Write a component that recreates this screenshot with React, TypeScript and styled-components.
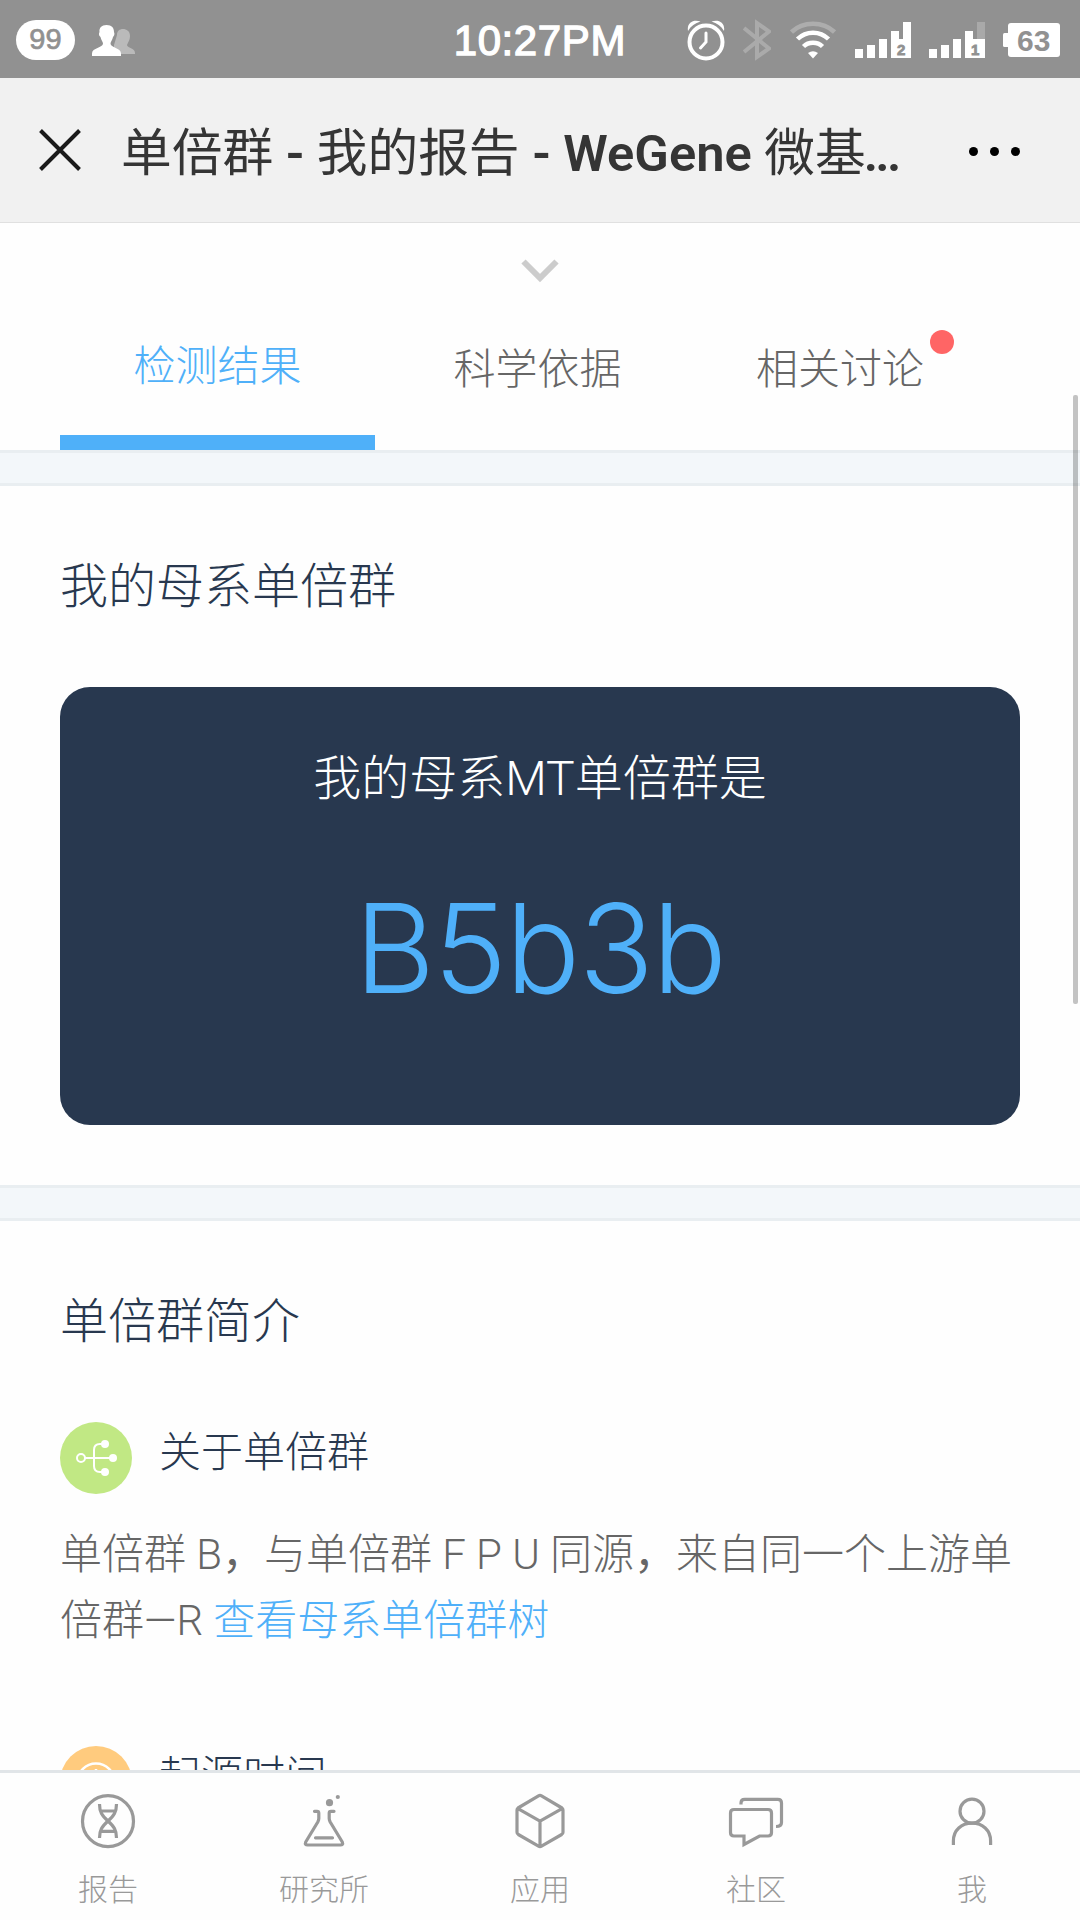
import React from "react";
import styled, { createGlobalStyle } from "styled-components";

const GlobalStyle = createGlobalStyle`
  html, body { margin: 0; padding: 0; }
  body { background: #fefefe; overflow: hidden; }
  * { box-sizing: border-box; }
`;

const Screen = styled.div`
  position: relative;
  width: 1080px;
  height: 1920px;
  display: flex;
  flex-direction: column;
  overflow: hidden;
  background: #fefefe;
  font-family: Roboto, "Noto Sans CJK SC", sans-serif;
  font-weight: 300;
`;

/* Status bar */
const StatusBar = styled.header`
  flex: none;
  height: 78px;
  padding: 0 20px 0 16px;
  display: grid;
  grid-template-columns: 1fr 176px 1fr;
  align-items: center;
  background: #919191;
`;
const StatusLeft = styled.div`
  display: flex;
  align-items: center;
  gap: 17px;
`;
const CountPill = styled.span`
  width: 59px;
  height: 40px;
  border-radius: 20px;
  background: #fff;
  color: #919191;
  font: 400 29px/38px "Liberation Sans", sans-serif;
  -webkit-text-stroke: 0.7px #919191;
  text-align: center;
`;
const Clock = styled.time`
  font: 400 42px/78px "Liberation Sans", sans-serif;
  -webkit-text-stroke: 1.3px #fff;
  color: #fff;
  letter-spacing: 0.6px;
  text-align: right;
  white-space: nowrap;
  padding-top: 2px;
`;
const StatusRight = styled.div`
  display: flex;
  align-items: center;
  justify-content: flex-end;
  gap: 18px;
  padding-bottom: 1px;
`;
const StatusIcon = styled.svg<{ $after?: number }>`
  display: block;
  flex: none;
  margin-right: ${(p) => p.$after ?? 0}px;
`;
const SignalDigit = styled.text`
  font: 700 15px "Liberation Sans", sans-serif;
  fill: #919191;
  stroke: #919191;
  stroke-width: 0.8px;
`;
const BatteryDigits = styled.text`
  font: 700 30px "Liberation Sans", sans-serif;
  fill: #919191;
`;

/* Title bar */
const TitleBar = styled.div`
  flex: none;
  height: 145px;
  padding: 0 60px 0 39px;
  display: flex;
  align-items: center;
  background: #f1f1f1;
  border-bottom: 1px solid #e0e0e0;
`;
const Title = styled.h1`
  flex: 1;
  margin: 0 0 0 40px;
  padding-top: 7px;
  font-size: 50.7px;
  line-height: 80px;
  font-weight: 400;
  color: #353535;
  white-space: nowrap;
`;
const Strong = styled.span`
  font-weight: 600;
`;
const Ellipsis = styled.span`
  font-weight: 600;
  letter-spacing: -2.8px;
  margin-left: -2px;
`;

/* Scrolling content */
const Content = styled.main`
  flex: 1;
  min-height: 0;
  overflow: hidden;
`;
const Expander = styled.div`
  height: 77px;
  padding-top: 36px;
  display: flex;
  justify-content: center;
`;
const Tabs = styled.nav`
  height: 150px;
  padding: 0 60px;
  display: flex;
`;
const Tab = styled.div<{ $width: number; $active?: boolean }>`
  width: ${(p) => p.$width}px;
  padding-top: ${(p) => (p.$active ? 37 : 40)}px;
  text-align: center;
  font-size: 42px;
  line-height: 60px;
  color: ${(p) => (p.$active ? "#4fb0f9" : "#666")};
  border-bottom: ${(p) => (p.$active ? "15px solid #4fb0f9" : "none")};
`;
const TabLabel = styled.span`
  position: relative;
`;
const Dot = styled.i`
  position: absolute;
  left: 174px;
  top: -15px;
  width: 24px;
  height: 24px;
  border-radius: 50%;
  background: #ff6565;
`;
const Band = styled.div`
  height: 36px;
  background: #f3f7fa;
  border: solid #e9eef1;
  border-width: 3px 0;
`;
const Section = styled.section<{ $height?: number }>`
  height: ${(p) => (p.$height ? p.$height + "px" : "auto")};
  padding: 66px 60px 0;
`;
const SectionTitle = styled.h2`
  margin: 0;
  font-size: 48px;
  line-height: 70px;
  font-weight: 300;
  color: #28384f;
`;
const ResultCard = styled.div`
  height: 438px;
  margin-top: 65px;
  padding-top: 57px;
  border-radius: 30px;
  background: #28384f;
  text-align: center;
`;
const ResultLabel = styled.div`
  font-size: 48px;
  line-height: 70px;
  color: #fff;
`;
const ResultValue = styled.div`
  margin-top: 59px;
  font-family: Inter, "Liberation Sans", sans-serif;
  font-size: 124px;
  line-height: 150px;
  font-weight: 300;
  letter-spacing: -1.5px;
  color: #4fb0f9;
`;
const ItemHead = styled.div<{ $top: number }>`
  margin-top: ${(p) => p.$top}px;
  display: flex;
  gap: 27px;
`;
const ItemIcon = styled.div<{ $color: string }>`
  width: 72px;
  height: 72px;
  border-radius: 50%;
  background: ${(p) => p.$color};
`;
const ItemTitle = styled.h3`
  margin: 0;
  padding-top: 2px;
  font-size: 42px;
  line-height: 58px;
  font-weight: 300;
  color: #28384f;
`;
const Paragraph = styled.p`
  margin: 28px 0 0;
  font-size: 42px;
  line-height: 66px;
  color: #666;
`;
const Comma = styled.span`
  font-weight: 400;
`;
const Link = styled.a`
  color: #4fb0f9;
`;
const ScrollThumb = styled.div`
  position: absolute;
  right: 2px;
  top: 395px;
  width: 5px;
  height: 609px;
  border-radius: 2px;
  background: rgba(0, 0, 0, 0.23);
`;

/* Bottom navigation */
const BottomNav = styled.nav`
  flex: none;
  height: 150px;
  display: grid;
  grid-template-columns: repeat(5, 1fr);
  border-top: 3px solid #e1e5e8;
  background: #fefefe;
`;
const NavItem = styled.div`
  display: flex;
  flex-direction: column;
  align-items: center;
  padding-top: 18px;
  gap: 16px;
  font-size: 30px;
  line-height: 46px;
  color: #999;
`;
const NavIcon = styled.svg`
  display: block;
  width: 60px;
  height: 60px;
  fill: none;
  stroke: #999;
  stroke-width: 3.2;
`;

const Signal = ({ digit, weak }: { digit: string; weak?: boolean }) => (
  <StatusIcon width="56" height="36" viewBox="0 0 56 36" fill="#fff">
    <rect x="0" y="27" width="8" height="9" />
    <rect x="12" y="23" width="8" height="13" />
    <rect x="24" y="17" width="8" height="19" />
    <rect x="36" y="9" width="8" height="27" />
    <rect x="48" y="0" width="8" height="17" fill={weak ? "#a9a9a9" : "#fff"} />
    <rect x="36" y="17" width="20" height="19" />
    <SignalDigit x="42" y="33">{digit}</SignalDigit>
  </StatusIcon>
);

const icons = {
  report: (
    <>
      <circle cx="30" cy="30.200" r="25.500" />
      <path d="M21.500 13c0 8 2.500 11.500 8.500 17s8.500 9 8.500 17M38.500 13c0 8-2.500 11.500-8.500 17s-8.500 9-8.500 17M23 20h14M23 40.300h14" />
    </>
  ),
  lab: (
    <>
      <path strokeLinecap="round" strokeLinejoin="round" d="M20.500 20.300h2.500q1.800 0 1.800 1.800v5.400q0 1.500-1 3.500L11.700 51q-1.200 3 2 3h32.600q3.200 0 2-3L36.200 31q-1-2-1-3.500v-5.400q0-1.800 1.800-1.800H40M21.500 46.800h17" />
      <circle cx="35.500" cy="11.700" r="3.600" fill="#999" stroke="none" />
      <circle cx="43.800" cy="6" r="2.100" fill="#999" stroke="none" />
    </>
  ),
  apps: (
    <path strokeLinejoin="round" d="M28.500 4.900q1.500-.9 3 0L52 17q1 .7 1 2V41.200q0 1.500-1.300 2.300L31.500 55.200q-1.500 1-3 0L8.300 43.500Q7 42.700 7 41.200V19q0-1.300 1-2zM8 17.700l22 12.500 22-12.500M30 30.200v25" />
  ),
  community: (
    <>
      <path d="M8 18.500h34q3.500 0 3.500 3.500v19.500q0 3.500-3.500 3.500h-8.500L18 53.500V45H8q-3.500 0-3.500-3.500V22q0-3.500 3.500-3.500z" />
      <path d="M15 13.500V12q0-3.700 3.700-3.700h33.100q3.700 0 3.700 3.700v19.500q0 4-5.500 4" />
    </>
  ),
  me: (
    <>
      <circle cx="30" cy="20.200" r="12" />
      <path d="M11.400 54v-4C11.400 39 19.500 32.200 30 32.200s18.600 6.800 18.600 17.800v4" />
    </>
  ),
};

const navItems: { label: string; icon: React.ReactNode }[] = [
  { label: "报告", icon: icons.report },
  { label: "研究所", icon: icons.lab },
  { label: "应用", icon: icons.apps },
  { label: "社区", icon: icons.community },
  { label: "我", icon: icons.me },
];

export default function App() {
  return (
    <Screen>
      <GlobalStyle />
      <StatusBar>
        <StatusLeft>
          <CountPill>99</CountPill>
          <StatusIcon width="43" height="31" viewBox="0 0 43 31">
            <path fill="#bababa" d="M25 10c0-4 2.500-6 6-6s7 2 7 7c0 4-2 6-3 9 0 3 8 3 8 8v1H22V20z" />
            <path fill="#fff" d="M14.500 0C20 0 22 3 22 7c1 2 0 4-1 5-.5 3-2.500 5-2.500 6.500 0 4.500 10.500 4 10.500 10V31H0v-2.500c0-6 11-5.500 11-10C11 17 9 15 8.500 12 7 11 6.500 9 7.500 7 7 3 9.500 0 14.500 0z" />
          </StatusIcon>
        </StatusLeft>
        <Clock>10:27PM</Clock>
        <StatusRight>
          <StatusIcon width="38" height="42" viewBox="0 0 38 42" fill="none" stroke="#fff">
            <circle cx="19" cy="23" r="16.500" strokeWidth="4" />
            <path strokeWidth="3" strokeLinecap="round" d="M19 14v9l-5.500 6" />
            <path fill="#fff" stroke="none" d="M1 12C-.5 3 7 0 13.500 2.500 8 4 4 7 1 12zM37 12C38.500 3 31 0 24.500 2.500 30 4 34 7 37 12z" />
          </StatusIcon>
          <StatusIcon $after={1} width="28" height="42" viewBox="0 0 28 42" fill="none" stroke="#aaa" strokeWidth="4">
            <path d="M1 9l25 20.500L14 38V4l12 8.500L1 33" />
          </StatusIcon>
          <StatusIcon $after={1} width="46" height="40" viewBox="0 0 46 40" fill="none" stroke="#fff" strokeWidth="4.500">
            <path stroke="#adadad" d="M1.500 12C13 1 33 1 44.500 12" />
            <path d="M7.500 19C16 10.500 30 10.500 38.500 19M13.500 26.500c5-5 14-5 19 0" />
            <path fill="#fff" stroke="none" d="M18 33q5-3.500 10 0l-5 5.500z" />
          </StatusIcon>
          <Signal digit="2" />
          <Signal digit="1" weak />
          <StatusIcon width="57" height="34" viewBox="0 0 57 34" fill="#fff">
            <rect x="5" y="0" width="52" height="34" rx="3" />
            <rect x="0" y="10" width="8" height="14" rx="1.500" />
            <BatteryDigits x="14" y="28">63</BatteryDigits>
          </StatusIcon>
        </StatusRight>
      </StatusBar>

      <TitleBar>
        <StatusIcon width="42" height="42" viewBox="0 0 42 42" stroke="#1a1a1a" strokeWidth="4">
          <path d="M1.500 1.500l39 39M40.500 1.500l-39 39" />
        </StatusIcon>
        <Title>
          单倍群 <Strong>-</Strong> 我的报告 <Strong>- WeGene</Strong> 微基<Ellipsis>...</Ellipsis>
        </Title>
        <StatusIcon width="51" height="11" viewBox="0 0 51 11" fill="#000">
          <circle cx="4.500" cy="6.500" r="4.500" />
          <circle cx="25.500" cy="6.500" r="4.500" />
          <circle cx="46.500" cy="6.500" r="4.500" />
        </StatusIcon>
      </TitleBar>

      <Content>
        <Expander>
          <StatusIcon width="38" height="24" viewBox="0 0 38 24" fill="none" stroke="#ccc" strokeWidth="6">
            <path d="M2.500 2.500L19 19 35.500 2.500" />
          </StatusIcon>
        </Expander>
        <Tabs>
          <Tab $width={315} $active>检测结果</Tab>
          <Tab $width={325}>科学依据</Tab>
          <Tab $width={280}>
            <TabLabel>
              相关讨论
              <Dot />
            </TabLabel>
          </Tab>
        </Tabs>
        <Band />
        <Section $height={699}>
          <SectionTitle>我的母系单倍群</SectionTitle>
          <ResultCard>
            <ResultLabel>我的母系MT单倍群是</ResultLabel>
            <ResultValue>B5b3b</ResultValue>
          </ResultCard>
        </Section>
        <Band />
        <Section>
          <SectionTitle>单倍群简介</SectionTitle>
          <ItemHead $top={65}>
            <ItemIcon $color="#c1e884">
              <StatusIcon width="72" height="72" viewBox="0 0 72 72" fill="none" stroke="#fff" strokeWidth="2">
                <circle cx="21" cy="36" r="4" />
                <path d="M25 36h28M45 22h-5q-6 0-6 6v16q0 6 6 6h5" />
                <g fill="#fff" stroke="none">
                  <circle cx="45" cy="22" r="4" />
                  <circle cx="53" cy="36" r="4" />
                  <circle cx="45" cy="50" r="4" />
                </g>
              </StatusIcon>
            </ItemIcon>
            <ItemTitle>关于单倍群</ItemTitle>
          </ItemHead>
          <Paragraph>
            单倍群 B<Comma>，</Comma>与单倍群 F P U 同源<Comma>，</Comma>来自同一个上游单
            <br />
            倍群—R <Link>查看母系单倍群树</Link>
          </Paragraph>
          <ItemHead $top={92}>
            <ItemIcon $color="#ffcb7e">
              <StatusIcon width="72" height="72" viewBox="0 0 72 72" fill="none" stroke="#fff" strokeWidth="2.500">
                <circle cx="36" cy="36" r="18.500" />
                <path d="M36 23v13l8 5" />
              </StatusIcon>
            </ItemIcon>
            <ItemTitle>起源时间</ItemTitle>
          </ItemHead>
        </Section>
      </Content>

      <BottomNav>
        {navItems.map((item) => (
          <NavItem key={item.label}>
            <NavIcon viewBox="0 0 60 60">{item.icon}</NavIcon>
            {item.label}
          </NavItem>
        ))}
      </BottomNav>
      <ScrollThumb />
    </Screen>
  );
}
